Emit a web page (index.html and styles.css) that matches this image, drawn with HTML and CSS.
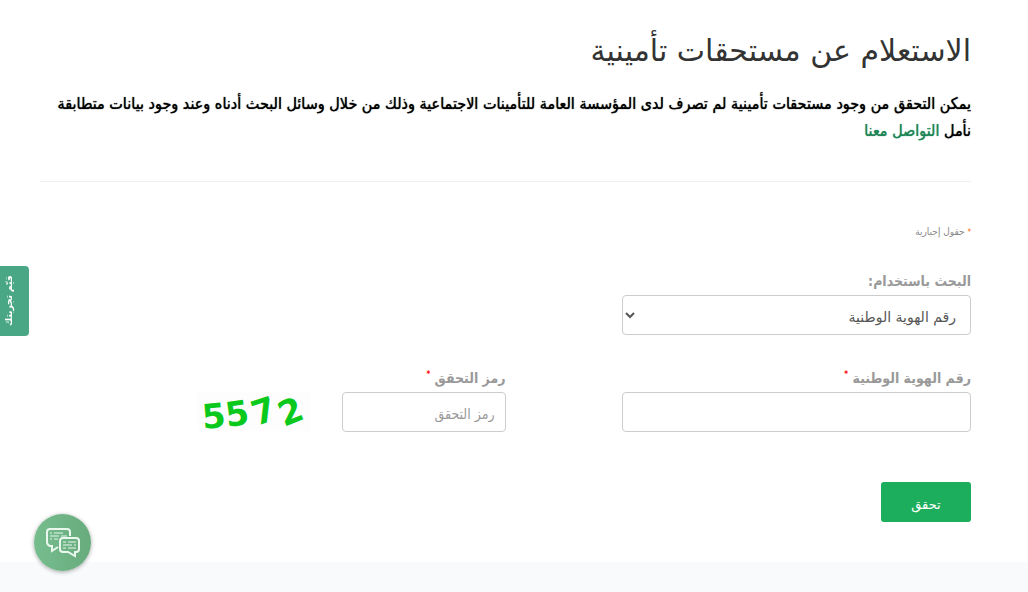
FILE: index.html
```html
<!DOCTYPE html>
<html lang="ar" dir="rtl">

<head>
  <meta charset="UTF-8">
  <meta name="viewport" content="width=device-width, initial-scale=1.0">
  <title>الاستعلام عن مستحقات تأمينية</title>
  <link rel="stylesheet" href="styles.css">
</head>

<body>
<main class="page">
  <h1 class="title">الاستعلام عن مستحقات تأمينية</h1>
  <p class="intro">يمكن التحقق من وجود مستحقات تأمينية لم تصرف لدى المؤسسة العامة للتأمينات الاجتماعية وذلك من خلال وسائل البحث أدناه وعند وجود بيانات متطابقة نأمل <a href="#">التواصل معنا</a></p>
  <hr class="divider">
  <form class="form">
    <p class="note"><span class="note-star">*</span> حقول إجبارية</p>
    <div class="row">
      <div class="field">
        <label for="search_by">البحث باستخدام:</label>
        <select id="search_by" class="control">
          <option>رقم الهوية الوطنية</option>
        </select>
      </div>
    </div>
    <div class="row">
      <div class="field">
        <label for="national_id">رقم الهوية الوطنية <sup>*</sup></label>
        <input id="national_id" class="control" type="text">
      </div>
      <div class="field">
        <label for="captcha">رمز التحقق <sup>*</sup></label>
        <div class="captcha">
          <input id="captcha" class="control" type="text" placeholder="رمز التحقق">
          <svg class="captcha-code" viewBox="0 0 114 39" width="114" height="39" direction="ltr">
            <text transform="translate(6 37) rotate(-5)">5</text>
            <text transform="translate(30 35) rotate(-8)">5</text>
            <text transform="translate(59 34) rotate(-18)">7</text>
            <text transform="translate(87 35) rotate(-22)">2</text>
          </svg>
        </div>
      </div>
    </div>
    <button class="submit" type="button">تحقق</button>
  </form>
</main>
<footer class="footer"></footer>

<button class="feedback" type="button">قيّم تجربتك</button>
<button class="chat" type="button" aria-label="محادثة">
  <svg viewBox="0 0 36 32" width="36" height="32">
    <path d="M13 20 L7 24 V19 H5 Q2 18 2 15 V5 Q2 2 5 2 H22 Q25 2 25 5 V9"/>
    <path d="M18 11 H31 Q34 11 34 14 V22 Q34 25 31 25 H30 V29 L23 25 H18 Q15 25 15 22 V14 Q15 11 18 11 Z"/>
    <path class="lines" d="M5 6 H7 M9 6 H18 M5 9 H14 M16 9 H22 M5 12 H7 M9 12 H13 M18 15 H21 M23 15 H31 M18 18 H27 M29 18 H31 M18 21 H21 M23 21 H31"/>
  </svg>
</button>
</body>
</html>
```
FILE: styles.css
```css
* {
  box-sizing: border-box;
}
body {
  margin: 0;
  display: flex;
  flex-direction: column;
  min-height: 100vh;
  font-family: 'DejaVu Sans', sans-serif;
  font-size: 14px;
  color: #000;
  background-color: #fff;
}
.page {
  padding: 30px 57px 40px 40px;
}
.title {
  margin: 0 0 18px;
  font-size: 30px;
  line-height: 42px;
  font-weight: 400;
  color: #333;
}
.intro {
  margin: 0 0 37px;
  font-family: 'DejaVu Sans Condensed', 'DejaVu Sans', sans-serif;
  font-size: 16px;
  line-height: 27px;
  text-shadow: 0 0 1px currentColor;
}
.intro a {
  color: #1b8354;
  text-decoration: none;
}
.divider {
  margin: 0;
  border: 0;
  border-top: 1px solid #eee;
}
.note {
  margin: 40px 0 27px;
  font-family: 'DejaVu Sans Condensed', 'DejaVu Sans', sans-serif;
  font-size: 10px;
  line-height: 20px;
  color: #888;
}
.note-star {
  font-size: 8px;
  color: #f60;
}
.row {
  display: flex;
  margin-bottom: 32px;
}
.field {
  width: 50%;
}
.field label {
  display: block;
  margin-bottom: 3px;
  font-family: 'DejaVu Sans Condensed', 'DejaVu Sans', sans-serif;
  line-height: 22px;
  font-weight: 700;
  color: #999;
}
.field sup {
  font-size: 8px;
  line-height: 0;
  color: #f00;
}
.control {
  display: block;
  width: 75%;
  height: 40px;
  padding: 4px 10px 0;
  border: 1px solid #ccc;
  border-radius: 4px;
  font: inherit;
  color: #555;
  background-color: #fff;
}
.control::placeholder {
  font-family: 'DejaVu Sans Condensed', 'DejaVu Sans', sans-serif;
  color: #999;
}
.captcha {
  display: flex;
  gap: 31px;
}
.captcha .control {
  width: 164px;
}
.captcha-code {
  overflow: visible;
  background-color: #fdfdfd;
  font-size: 34px;
  font-weight: 700;
  fill: #0bc91c;
}
.submit {
  display: block;
  width: 90px;
  height: 40px;
  margin-top: 50px;
  padding: 4px 0 0;
  border: 0;
  border-radius: 3px;
  font: inherit;
  font-size: 13px;
  color: #fff;
  background-color: #1dae5d;
}
.footer {
  flex: 1;
  background-color: #f9fafc;
}
.feedback {
  position: fixed;
  left: 0;
  top: 266px;
  width: 29px;
  height: 70px;
  padding: 0 0 0 10px;
  border: 0;
  border-radius: 4px 0 0 4px;
  writing-mode: vertical-rl;
  transform: rotate(180deg);
  font: inherit;
  font-size: 9px;
  font-weight: 700;
  color: #fff;
  background-color: #4aa785;
}
.chat {
  position: fixed;
  left: 34px;
  bottom: 21px;
  display: flex;
  align-items: center;
  justify-content: center;
  width: 57px;
  height: 57px;
  padding: 0;
  border: 0;
  border-radius: 50%;
  background: linear-gradient(to right, #76bd8e, #68ab7d);
  box-shadow: 0 1px 4px rgba(0, 0, 0, 0.35);
}
.chat svg {
  fill: none;
  stroke: #e9f7ee;
  stroke-width: 2;
}
.chat .lines {
  stroke-width: 1;
}
```
